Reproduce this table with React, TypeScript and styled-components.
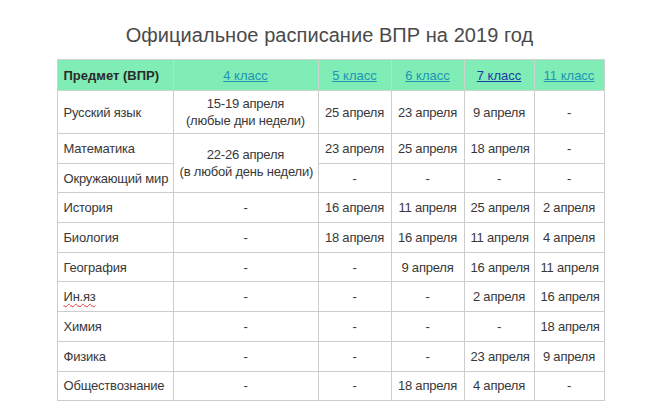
import React from "react";
import styled, { createGlobalStyle } from "styled-components";

const Global = createGlobalStyle`
  html, body { margin: 0; padding: 0; background: #fff; }
  body { font-family: "Liberation Sans", Arial, sans-serif; }
`;

const Page = styled.div`
  width: 659px;
  height: 416px;
  display: flex;
  flex-direction: column;
  align-items: center;
  padding-top: 23px;
  box-sizing: border-box;
`;

const Title = styled.h1`
  margin: 0 0 12px 0;
  font-size: 20px;
  line-height: 24px;
  font-weight: normal;
  color: #4a4a4a;
  letter-spacing: 0.05px;
`;

const Table = styled.table`
  border-collapse: collapse;
  table-layout: fixed;
  width: 547px;
  font-size: 13px;
  color: #383838;
  margin-left: 2px;
`;

const HeadRow = styled.tr`
  height: 31px;
  background: #80edb6;
`;

const Row = styled.tr`
  height: 29.7px;
`;

const Th = styled.th<{ $left?: boolean }>`
  border: 1px solid #c9d6cd;
  padding: 4px 6px;
  line-height: 17px;
  text-align: ${(p) => (p.$left ? "left" : "center")};
  font-weight: ${(p) => (p.$left ? "bold" : "normal")};
  color: #2a2a2a;
`;

const Td = styled.td<{ $left?: boolean }>`
  border: 1px solid #cdcdcd;
  padding: 4px 6px;
  line-height: 17px;
  letter-spacing: -0.2px;
  text-align: ${(p) => (p.$left ? "left" : "center")};
  vertical-align: middle;
  white-space: nowrap;
`;

const Link = styled.a<{ $visited?: boolean }>`
  color: ${(p) => (p.$visited ? "#1a3aa8" : "#1e93b4")};
  text-decoration: underline;
  cursor: pointer;
`;

const Misspelled = styled.span`
  text-decoration: underline wavy #e23b3b;
  text-decoration-thickness: 1px;
  text-underline-offset: 2px;
`;

const classes = [
  { label: "4 класс" },
  { label: "5 класс" },
  { label: "6 класс" },
  { label: "7 класс", visited: true },
  { label: "11 класс" },
];

const widths = [116, 145, 73, 73, 70, 70];

type R = { subject: React.ReactNode; cells: string[] };

const simpleRows: R[] = [
  { subject: "История", cells: ["-", "16 апреля", "11 апреля", "25 апреля", "2 апреля"] },
  { subject: "Биология", cells: ["-", "18 апреля", "16 апреля", "11 апреля", "4 апреля"] },
  { subject: "География", cells: ["-", "-", "9 апреля", "16 апреля", "11 апреля"] },
  { subject: <Misspelled>Ин.яз</Misspelled>, cells: ["-", "-", "-", "2 апреля", "16 апреля"] },
  { subject: "Химия", cells: ["-", "-", "-", "-", "18 апреля"] },
  { subject: "Физика", cells: ["-", "-", "-", "23 апреля", "9 апреля"] },
  { subject: "Обществознание", cells: ["-", "-", "18 апреля", "4 апреля", "-"] },
];

export default function App() {
  return (
    <>
      <Global />
      <Page>
        <Title>Официальное расписание ВПР на 2019 год</Title>
        <Table>
          <colgroup>
            {widths.map((w, i) => (
              <col key={i} style={{ width: w }} />
            ))}
          </colgroup>
          <thead>
            <HeadRow>
              <Th $left>Предмет (ВПР)</Th>
              {classes.map((c) => (
                <Th key={c.label}>
                  <Link $visited={c.visited}>{c.label}</Link>
                </Th>
              ))}
            </HeadRow>
          </thead>
          <tbody>
            <Row>
              <Td $left>Русский язык</Td>
              <Td>
                15-19 апреля
                <br />
                (любые дни недели)
              </Td>
              <Td>25 апреля</Td>
              <Td>23 апреля</Td>
              <Td>9 апреля</Td>
              <Td>-</Td>
            </Row>
            <Row>
              <Td $left>Математика</Td>
              <Td rowSpan={2}>
                22-26 апреля
                <br />
                (в любой день недели)
              </Td>
              <Td>23 апреля</Td>
              <Td>25 апреля</Td>
              <Td>18 апреля</Td>
              <Td>-</Td>
            </Row>
            <Row>
              <Td $left>Окружающий мир</Td>
              <Td>-</Td>
              <Td>-</Td>
              <Td>-</Td>
              <Td>-</Td>
            </Row>
            {simpleRows.map((r, i) => (
              <Row key={i}>
                <Td $left>{r.subject}</Td>
                {r.cells.map((c, j) => (
                  <Td key={j}>{c}</Td>
                ))}
              </Row>
            ))}
          </tbody>
        </Table>
      </Page>
    </>
  );
}
